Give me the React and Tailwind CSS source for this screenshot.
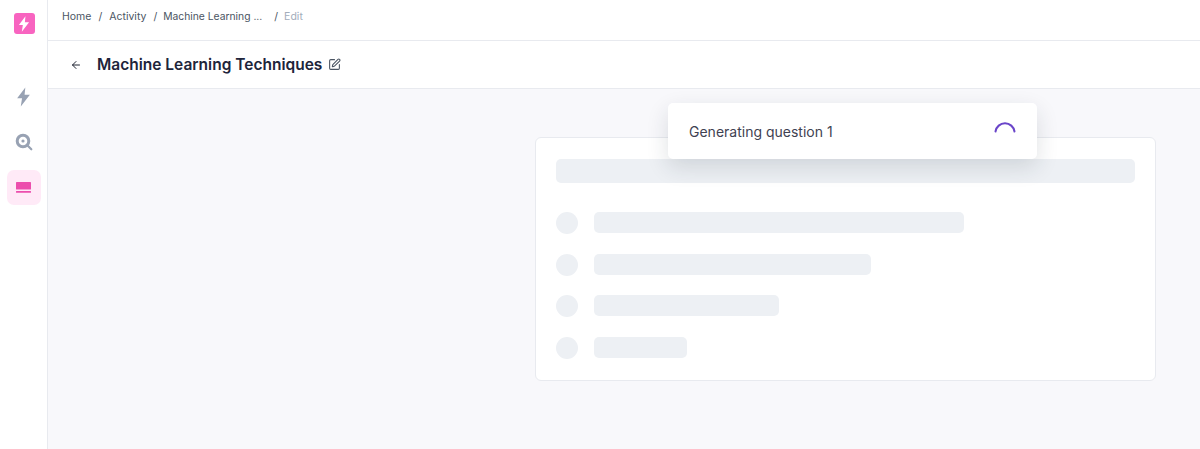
import { ArrowLeft, SquarePen } from "lucide-react";

const rows = ["w-[370px]", "w-[277px]", "w-[185px]", "w-[93px]"];

function Bolt({ className }) {
  return (
    <svg viewBox="0 0 16 22" className={className} fill="currentColor">
      <path d="M10 0.5 1 12.4h5.4L5 21.5l10-13H9.2z" />
    </svg>
  );
}

export default function App() {
  return (
    <div className="flex h-[449px] w-[1200px] overflow-hidden bg-white font-['Inter',sans-serif]">
      <aside className="flex w-[48px] shrink-0 flex-col items-center border-r border-[#e8eaef] bg-white">
        <div className="mt-[13px] ml-[1px] flex h-[21px] w-[21px] items-center justify-center rounded-[3px] bg-[#f864c0]">
          <Bolt className="h-[16px] w-[12px] text-white" />
        </div>
        <Bolt className="mt-[53px] h-[20px] w-[15px] text-[#98a2b3]" />
        <svg viewBox="0 0 18 18" className="mt-[26px] h-[18px] w-[18px] text-[#98a2b3]" fill="none" stroke="currentColor">
          <circle cx="8" cy="8" r="5.8" strokeWidth="3" />
          <circle cx="8" cy="8" r="1.6" fill="currentColor" stroke="none" />
          <path d="M12.8 12.8 16.3 16.3" strokeWidth="2.2" strokeLinecap="round" />
        </svg>
        <div className="mt-[19px] flex h-[35px] w-[34px] items-center justify-center rounded-[7px] bg-[#ffeaf7]">
          <svg viewBox="0 0 15 11" className="h-[11px] w-[15px] text-[#ec4ead]" fill="currentColor">
            <rect x="0" y="0" width="15" height="7.5" rx="0.6" />
            <rect x="0" y="9" width="15" height="1.8" rx="0.5" />
          </svg>
        </div>
      </aside>

      <div className="relative flex min-w-0 flex-1 flex-col">
        <nav className="flex h-[41px] shrink-0 items-center border-b border-[#e8eaef] pb-[7px] pl-[14px] text-[10.5px] text-[#4b5563]">
          <span>Home</span>
          <span className="mx-[7px]">/</span>
          <span>Activity</span>
          <span className="mr-[6px] ml-[7px]">/</span>
          <span className="text-[10.3px]">Machine Learning ...</span>
          <span className="mr-[6px] ml-[12px]">/</span>
          <span className="text-[#a3adbb]">Edit</span>
        </nav>

        <header className="flex h-[48px] shrink-0 items-start border-b border-[#e8eaef] pl-[22px]">
          <ArrowLeft className="mt-[18px] h-[12px] w-[12px] text-[#1f2433]" strokeWidth={2} />
          <h1 className="mt-[14px] ml-[15px] text-[15.5px] leading-[20px] font-semibold text-[#20243a]">Machine Learning Techniques</h1>
          <SquarePen className="mt-[17px] ml-[6px] h-[13px] w-[13px] text-[#4b5563]" strokeWidth={2} />
        </header>

        <main className="flex flex-1 justify-end bg-[#f8f8fb] pt-[48px] pr-[44px]">
          <section className="h-[244px] w-[621px] rounded-[6px] border border-[#e8eaef] bg-white pt-[21px] pl-[20px]">
            <div className="h-[24px] w-[579px] rounded-[5px] bg-[#edf0f4]" />
            <div className="mt-[29px] flex flex-col gap-[19.67px]">
              {rows.map((w) => (
                <div key={w} className="flex items-start gap-[16px]">
                  <div className="h-[22px] w-[22px] rounded-full bg-[#edf0f4]" />
                  <div className={`h-[21px] rounded-[5px] bg-[#edf0f4] ${w}`} />
                </div>
              ))}
            </div>
          </section>
        </main>

        <div className="absolute top-[103px] left-[620px] flex h-[56px] w-[369px] items-center justify-between rounded-[5px] bg-white pr-[20px] pl-[21px] shadow-[0_8px_22px_rgba(31,41,55,0.14)]">
          <span className="text-[14px] text-[#3f4252]">Generating question 1</span>
          <svg viewBox="0 0 24 12" className="mb-[8px] h-[12px] w-[24px] text-[#6a45c9]" fill="none" stroke="currentColor">
            <path d="M2.5 10.5a9.6 9.6 0 0 1 19 0" strokeWidth="2" strokeLinecap="round" />
          </svg>
        </div>
      </div>
    </div>
  );
}
